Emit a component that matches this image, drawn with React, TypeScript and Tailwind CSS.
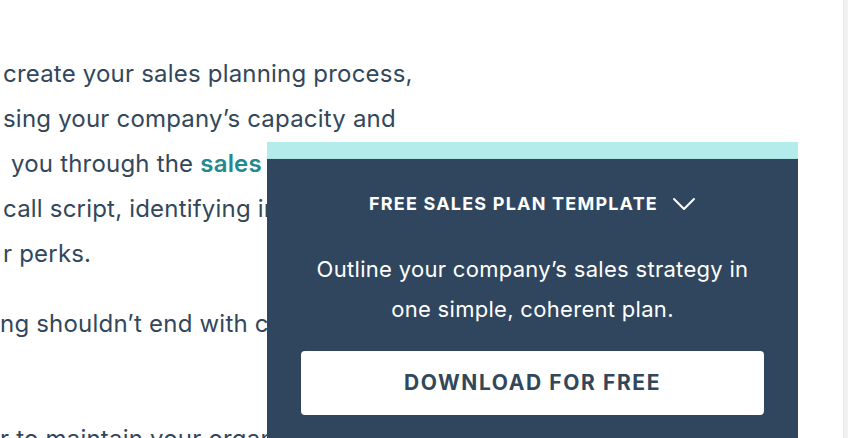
const lines = [
  { text: "create your sales planning process,", pad: "pl-[3px]" },
  { text: "sing your company’s capacity and", pad: "pl-[3px]" },
  { text: "you through the ", pad: "pl-[11px]", link: "sales" },
  { text: "call script, identifying in", pad: "pl-[3px]" },
  { text: "r perks.", pad: "pl-[3px]" },
];

function Chevron() {
  return (
    <svg width="24" height="14" viewBox="0 0 24 14" fill="none" stroke="currentColor" strokeWidth="2" strokeLinecap="round" strokeLinejoin="round">
      <polyline points="2,2 12,12 22,2" />
    </svg>
  );
}

export default function App() {
  return (
    <main className="flex h-[438px] w-full overflow-hidden bg-white font-['Inter',sans-serif]">
      <div className="relative flex-1 overflow-hidden">
        <article className="pt-[51px] text-[24px] tracking-[0.2px] text-[#33475b]">
          <div>
            {lines.map((l) => (
              <p key={l.text} className={`h-[45px] whitespace-nowrap leading-[45px] ${l.pad}`}>
                {l.text}
                {l.link && <span className="font-semibold text-[#23898c]">{l.link}</span>}
              </p>
            ))}
          </div>
          <p className="mt-[25px] h-[45px] whitespace-nowrap leading-[45px]">
            ng shouldn’t end with closing a deal.
          </p>
          <p className="mt-[70px] h-[45px] whitespace-nowrap leading-[45px]">
            r to maintain your organization and grow
          </p>
        </article>

        <aside className="absolute left-[267px] top-[142px] flex h-[320px] w-[531px] flex-col bg-[#30465e] text-white">
          <div className="h-[17px] border-b border-dotted border-[#a2dcdb] bg-[#b4ecec]" />
          <div className="flex flex-col items-center px-[34px] pt-[31px]">
            <button className="flex items-center gap-[14px] text-[18px] font-bold tracking-[1.2px]">
              FREE SALES PLAN TEMPLATE
              <Chevron />
            </button>
            <p className="mt-[32px] text-center text-[22px] leading-[40px] tracking-[0.3px]">
              Outline your company’s sales strategy in
              <br />
              one simple, coherent plan.
            </p>
            <button className="mt-[22px] flex h-[64px] w-full items-center justify-center rounded-[4px] bg-white text-[21px] font-bold tracking-[1.6px] text-[#33475b]">
              DOWNLOAD FOR FREE
            </button>
          </div>
        </aside>
      </div>
      <div className="w-[5px] border-l border-[#e8e8e8] bg-[#f1f1f1]" />
    </main>
  );
}
